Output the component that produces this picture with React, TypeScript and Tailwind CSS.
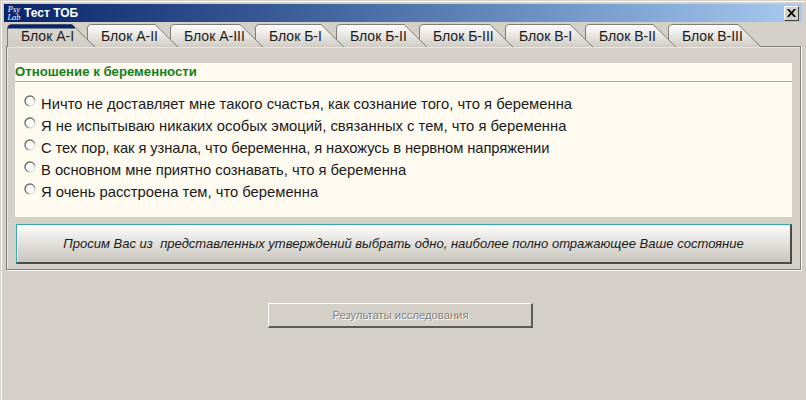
const font = { fontFamily: '"Liberation Sans", Arial, sans-serif' };

const tabs = [
  { label: "Блок А-I", w: 90, cls: "z-[9] mr-[-10px]", active: true },
  { label: "Блок А-II", w: 93, cls: "z-[8] mr-[-10px]" },
  { label: "Блок А-III", w: 95, cls: "z-[7] mr-[-10px]" },
  { label: "Блок Б-I", w: 91, cls: "z-[6] mr-[-10px]" },
  { label: "Блок Б-II", w: 93, cls: "z-[5] mr-[-10px]" },
  { label: "Блок Б-III", w: 96, cls: "z-[4] mr-[-10px]" },
  { label: "Блок В-I", w: 90, cls: "z-[3] mr-[-10px]" },
  { label: "Блок В-II", w: 93, cls: "z-[2] mr-[-10px]" },
  { label: "Блок В-III", w: 95, cls: "z-[1]" },
];

const answers = [
  { text: "Ничто не доставляет мне такого счастья, как сознание того, что я беременна", cls: "tracking-[0.01px]" },
  { text: "Я не испытываю никаких особых эмоций, связанных с тем, что я беременна", cls: "tracking-[0.01px]" },
  { text: "С тех пор, как я узнала, что беременна, я нахожусь в нервном напряжении", cls: "tracking-[-0.1px]" },
  { text: "В основном мне приятно сознавать, что я беременна", cls: "tracking-[-0.02px]" },
  { text: "Я очень расстроена тем, что беременна", cls: "tracking-normal" },
];

function Tab({ label, w, cls, active }: { label: string; w: number; cls: string; active?: boolean }) {
  const h = 23;
  const id = `g${w}${label.length}${active ? "a" : ""}`;
  const shape = `M0.5 ${h} V4 Q0.5 0.5 4 0.5 H${w - 25} L${w - 2} ${h}`;
  return (
    <div className={`relative h-[23px] pl-[14px] pt-[4px] text-[14px] leading-[16px] text-[#1a1a1a] ${cls}`} style={{ width: w }}>
      <svg className="absolute left-0 top-0" width={w} height={h} viewBox={`0 0 ${w} ${h}`}>
        <defs>
          <linearGradient id={id} x1="0" y1="0" x2="0" y2="1">
            <stop offset="0" stopColor={active ? "#dcd9d2" : "#ffffff"} />
            <stop offset="1" stopColor="#d0ccc4" />
          </linearGradient>
        </defs>
        <path d={`${shape} Z`} fill={`url(#${id})`} />
        <path d={shape} fill="none" stroke="#7f7d78" strokeWidth="1" />
        {active && <path d={`M1 4 Q1 1 4 1 H${w - 25} L${w - 22} 4 Z`} fill="#0a246a" stroke="#0a246a" />}
      </svg>
      <span className="relative whitespace-nowrap">{label}</span>
    </div>
  );
}

function Radio({ i }: { i: number }) {
  const id = `r${i}`;
  return (
    <svg className="mt-[-8px] mr-[5px] shrink-0" width="12" height="12" viewBox="0 0 12 12">
      <defs>
        <linearGradient id={id} x1="0" y1="0" x2="1" y2="1">
          <stop offset="0.15" stopColor="#66645e" />
          <stop offset="0.55" stopColor="#8a8882" />
          <stop offset="0.8" stopColor="#e4e1da" />
        </linearGradient>
      </defs>
      <circle cx="6" cy="6" r="5" fill="#ffffff" stroke={`url(#${id})`} strokeWidth="1.4" />
    </svg>
  );
}

export default function App() {
  return (
    <div className="h-[400px] w-[806px] overflow-hidden bg-[#d4d0c8]" style={font}>
      <div className="h-[400px] border-[1px] border-[#d4d0c8] border-b-0 shadow-[inset_1px_1px_0_#ffffff]">
        <div className="pl-[3px] pr-[3px] pt-[3px]">
          <div className="flex h-[18px] items-center justify-between bg-gradient-to-r from-[#0a246a] to-[#a6caf0] pl-[2px] pr-[3px]">
            <div className="flex items-center">
              <div
                className="flex w-[16px] flex-col items-center text-[8.5px] italic leading-[8px] text-white"
                style={{ fontFamily: '"Liberation Serif", serif' }}
              >
                <span>Psy</span>
                <span>Lab</span>
              </div>
              <span className="ml-[2px] text-[12px] font-bold leading-[16px] text-white">
                Тест ТОБ
              </span>
            </div>
            <div className="flex h-[15px] w-[15px] items-center justify-center border border-[#ffffff] border-r-[#404040] border-b-[#404040] bg-[#d4d0c8]">
              <svg width="9" height="8" viewBox="0 0 9 8">
                <path d="M0.8 0 L8.2 8 M8.2 0 L0.8 8" stroke="#000000" strokeWidth="1.8" />
              </svg>
            </div>
          </div>

          <div className="ml-[3px] mt-[2px] flex">
            {tabs.map((t) => (
              <Tab key={t.label} {...t} />
            ))}
          </div>

          <div className="ml-[2px] mt-[-1px] h-[224px] w-[795px] border border-[#807e78] px-[8px] pt-[16px] shadow-[1px_1px_0_#ffffff,inset_1px_1px_0_#e8e6e0]">
            <div className="h-[154px] w-[777px] bg-[#fffbf0]">
              <div className="h-[19px] border-b border-[#a9a79f] text-[13.2px] font-bold leading-[18px] text-[#16801a]">
                Отношение к беременности
              </div>
              <div className="flex flex-col pl-[9px] pt-[11px]">
                {answers.map((a, i) => (
                  <div key={a.text} className="flex h-[22px] items-center pt-[1px] text-[14.78px] leading-[21px] text-[#1a1a1a]">
                    <Radio i={i} />
                    <span className={`whitespace-nowrap ${a.cls}`}>{a.text}</span>
                  </div>
                ))}
              </div>
            </div>
            <div className="ml-[1px] mt-[7px] flex h-[40px] w-[776px] items-center justify-center border-t border-l border-t-[#38a8a8] border-l-[#38a8a8] border-r-2 border-b-2 border-r-[#4a4a46] border-b-[#4a4a46] bg-gradient-to-b from-[#fcfcfa] to-[#c8c5bd] shadow-[inset_1px_1px_0_#ffffff]">
              <span className="whitespace-pre text-[13.04px] italic text-[#1a1a1a]">
                Просим Вас из  представленных утверждений выбрать одно, наиболее полно отражающее Ваше состояние
              </span>
            </div>
          </div>

          <div className="ml-[264px] mt-[33px] flex h-[25px] w-[265px] items-center justify-center border border-t-[#ffffff] border-l-[#ffffff] border-r-2 border-b-2 border-r-[#5a5a56] border-b-[#5a5a56] bg-[#d4d0c8] pl-[1px] text-[11.25px] text-[#808080] [text-shadow:1px_1px_0_#ffffff]">
            Результаты исследования
          </div>
        </div>
      </div>
    </div>
  );
}
